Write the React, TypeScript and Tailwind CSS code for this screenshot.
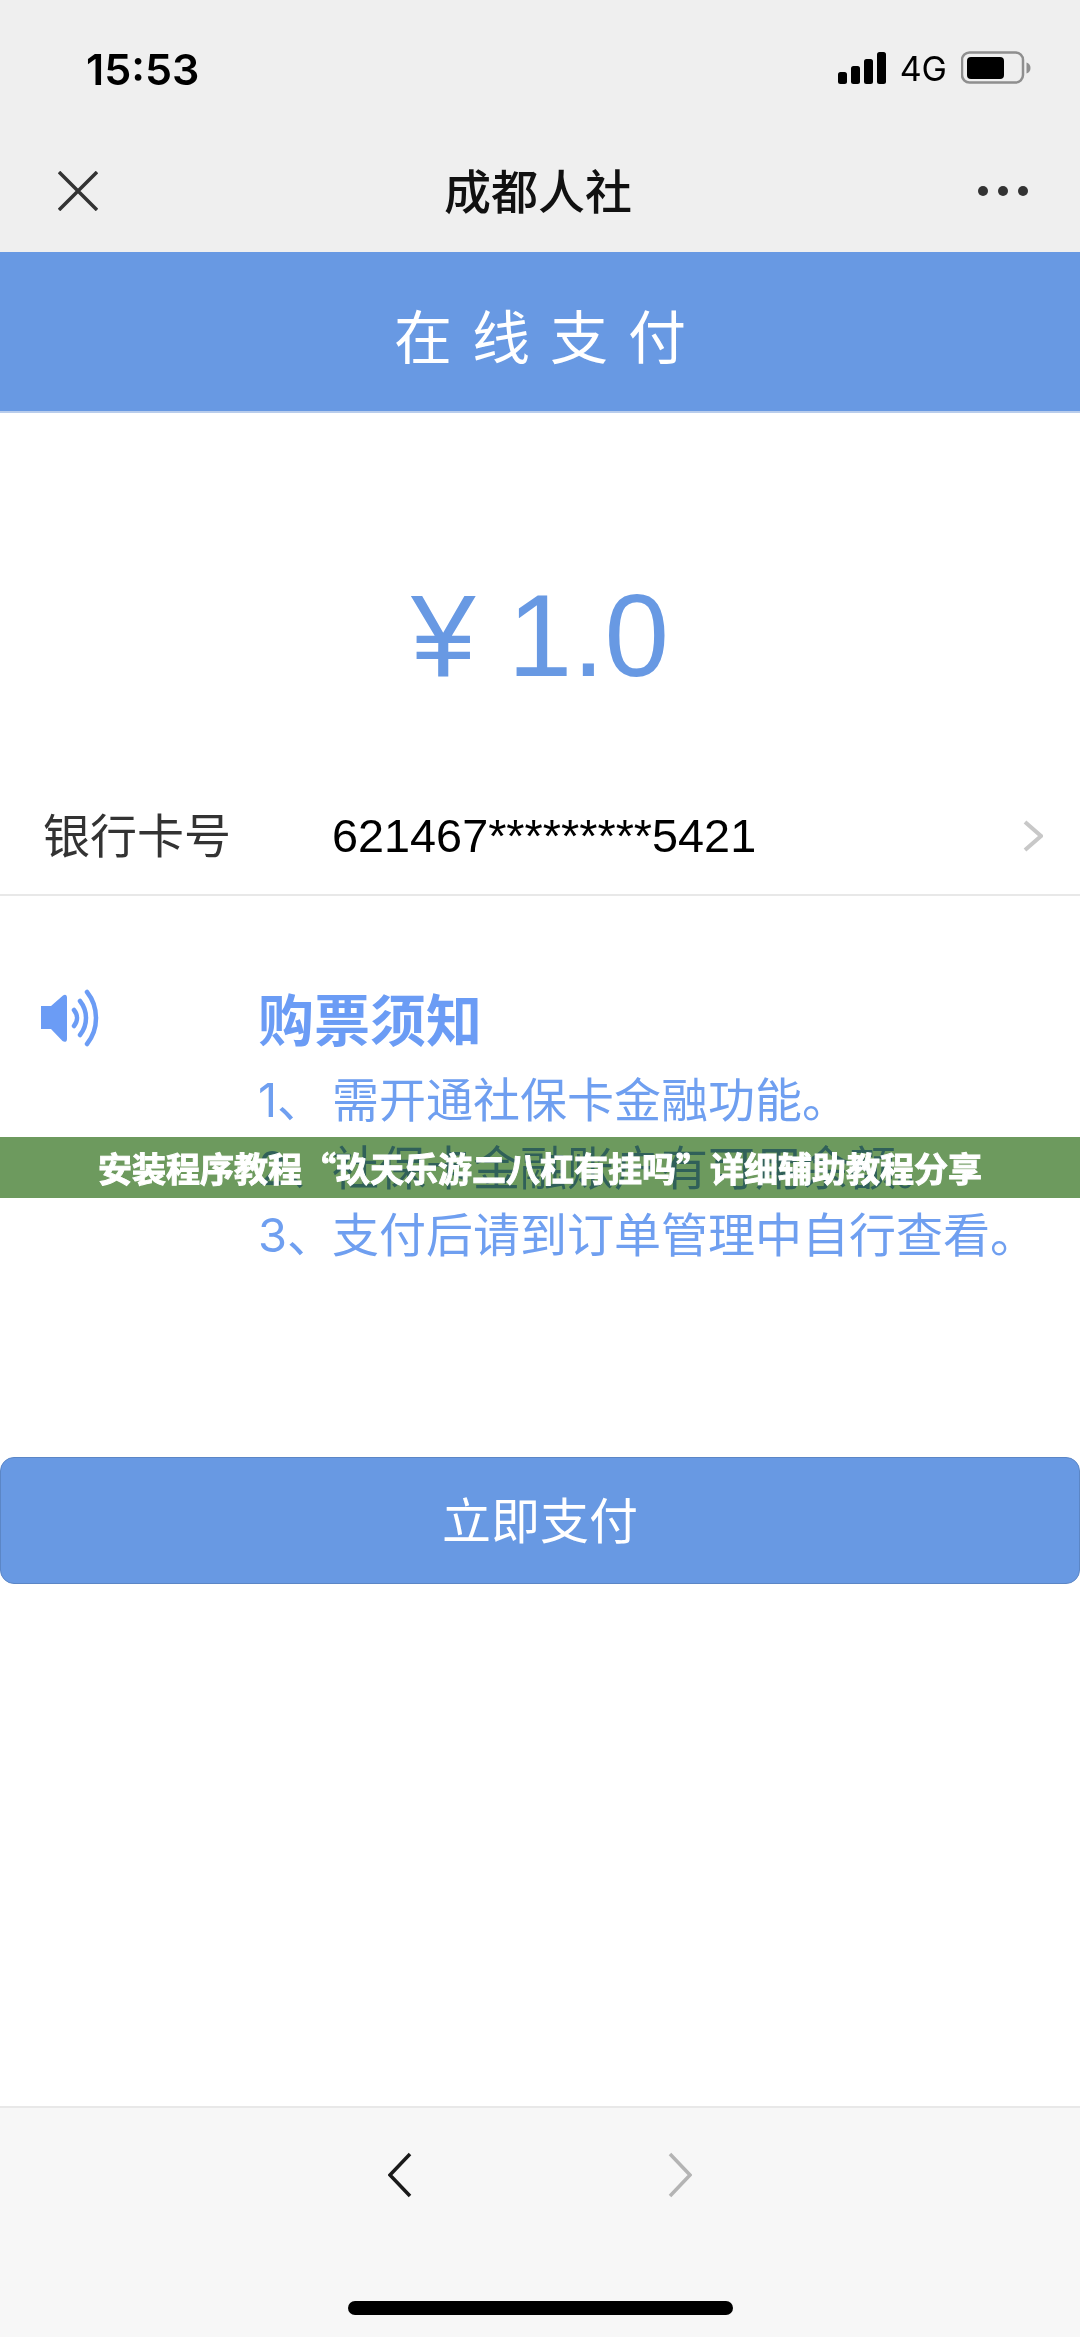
const cjk = "font-['Inter','Noto_Sans_CJK_SC',sans-serif]";

const notices = [
  ['1、', '需开通社保卡金融功能。'],
  ['2、', '社保卡金融账户有可用余额。'],
  ['3、', '支付后请到订单管理中自行查看。'],
];

function SignalIcon() {
  return (
    <svg width="48" height="32" viewBox="0 0 48 32" fill="#000">
      <rect x="0" y="20" width="9" height="12" rx="2.5" />
      <rect x="13" y="14" width="9" height="18" rx="2.5" />
      <rect x="26" y="7" width="9" height="25" rx="2.5" />
      <rect x="39" y="0" width="9" height="32" rx="2.5" />
    </svg>
  );
}

function BatteryIcon() {
  return (
    <svg width="70" height="34" viewBox="0 0 70 34">
      <rect x="1" y="1.5" width="61" height="30" rx="7.5" fill="none" stroke="#8f8f8f" strokeWidth="2.5" />
      <rect x="6" y="6" width="37" height="22" rx="4" fill="#000" />
      <path d="M65.5 11.5c2.5 .8 4 2.8 4 5.5s-1.500 4.700-4 5.500z" fill="#8f8f8f" />
    </svg>
  );
}

function SpeakerIcon() {
  return (
    <svg width="60" height="60" viewBox="0 0 60 60" fill="none">
      <path d="M1 17h10L23 6.500c2-1.700 4-.8 4 2V50c0 3-2.500 3.500-4.500 2L11 40H1z" fill="#6b9cf5" />
      <path d="M34 21c4 5 4 11 0 16" stroke="#6b9cf5" strokeWidth="4.500" strokeLinecap="round" />
      <path d="M40 12c8 10 8 24 0 34" stroke="#6b9cf5" strokeWidth="4.500" strokeLinecap="round" />
      <path d="M47 3c12 15 12 37 0 52" stroke="#6b9cf5" strokeWidth="4.500" strokeLinecap="round" />
    </svg>
  );
}

function Chevron({ dir, color, w, h, sw }: { dir: 'left' | 'right'; color: string; w: number; h: number; sw: number }) {
  const d = dir === 'left' ? `M${w - 2} 2 L2 ${h / 2} L${w - 2} ${h - 2}` : `M2 2 L${w - 2} ${h / 2} L2 ${h - 2}`;
  return (
    <svg width={w} height={h} viewBox={`0 0 ${w} ${h}`} fill="none">
      <path d={d} stroke={color} strokeWidth={sw} />
    </svg>
  );
}

export default function App() {
  return (
    <div lang="zh-CN" className={`relative flex h-[2337px] w-[1080px] flex-col overflow-hidden bg-white ${cjk}`}>
      {/* Status bar + nav */}
      <div className="h-[252px] shrink-0 bg-[#efefef]">
        <div className="flex h-[136px] items-center justify-between pl-[86px] pr-[49px]">
          <span className="pt-[2px] text-[43px] font-semibold text-black">15:53</span>
          <div className="flex items-center">
            <SignalIcon />
            <span className="ml-[14px] text-[34px] text-black">4G</span>
            <div className="ml-[14px]"><BatteryIcon /></div>
          </div>
        </div>
        <div className="flex h-[110px] items-center justify-between pl-[58px] pr-[52px]">
          <svg width="40" height="40" viewBox="0 0 40 40" fill="none">
            <path d="M1 1L39 39M39 1L1 39" stroke="#333" strokeWidth="3.500" />
          </svg>
          <span className="text-[47px] font-medium leading-none text-[#111]">成都人社</span>
          <div className="flex gap-[10px]">
            <span className="size-[10px] rounded-full bg-[#333]" />
            <span className="size-[10px] rounded-full bg-[#333]" />
            <span className="size-[10px] rounded-full bg-[#333]" />
          </div>
        </div>
      </div>

      {/* Title */}
      <div className="flex h-[161px] shrink-0 items-center justify-center border-b-2 border-[#b9cdec] bg-[#6899e3] pl-[20px] pt-[14px] text-[58px] tracking-[20px] text-white">
        在线支付
      </div>

      {/* Amount */}
      <div className="flex h-[357px] shrink-0 items-center justify-center pt-[88px] font-['Liberation_Sans',sans-serif] text-[116px] text-[#6899e3]">
        ¥ 1.0
      </div>

      {/* Card row */}
      <div className="flex h-[126px] shrink-0 items-center border-b-2 border-[#e8e8e8] pl-[43px] pr-[37px] pt-[8px]">
        <span className="w-[289px] text-[47px] text-[#333]">银行卡号</span>
        <span className="font-['Liberation_Sans',sans-serif] text-[46.800px] text-black">621467*********5421</span>
        <div className="ml-auto"><Chevron dir="right" color="#c8c8c8" w={20} h={32} sw={4} /></div>
      </div>

      {/* Notice */}
      <div className="flex pl-[40px] pt-[91px]">
        <div className="w-[218px] pt-[2px]"><SpeakerIcon /></div>
        <div>
          <div className="text-[56px] font-bold leading-[68px] text-[#6b9cf5]">购票须知</div>
          <div className="mt-[11px] text-[47px] leading-[67.500px] text-[#6f9ff0]">
            {notices.map(([num, line]) => (
              <div key={num} className="flex whitespace-nowrap">
                <span className="w-[74px]">{num}</span>
                <span>{line}</span>
              </div>
            ))}
          </div>
        </div>
      </div>

      {/* Pay button */}
      <button className="mt-[188px] flex h-[127px] w-[1080px] shrink-0 items-center justify-center rounded-[14px] border border-[#5b86c6] bg-[#6899e3] pt-[3px] text-[49px] text-white">
        立即支付
      </button>

      {/* Toolbar */}
      <div className="relative mt-auto h-[231px] shrink-0 border-t-2 border-[#e8e8e8] bg-[#f7f7f7]">
        <div className="flex justify-center gap-[256px] pt-[44px]">
          <Chevron dir="left" color="#1a1a1a" w={24} h={46} sw={3.500} />
          <Chevron dir="right" color="#b4b4b4" w={24} h={46} sw={3.500} />
        </div>
        <div className="absolute bottom-[22px] left-[348px] h-[14px] w-[385px] rounded-full bg-black" />
      </div>

      {/* Banner over page */}
      <div className="absolute left-0 top-[1137px] flex h-[61px] w-[1080px] items-center justify-center">
        <div className="absolute inset-0 bg-[#6d9a5e] mix-blend-multiply" />
        <span className="relative whitespace-nowrap font-['Noto_Sans_CJK_SC',sans-serif] text-[34px] font-bold text-white [-webkit-text-stroke:1px_white]">
          安装程序教程“玖天乐游二八杠有挂吗”详细辅助教程分享
        </span>
      </div>
    </div>
  );
}
